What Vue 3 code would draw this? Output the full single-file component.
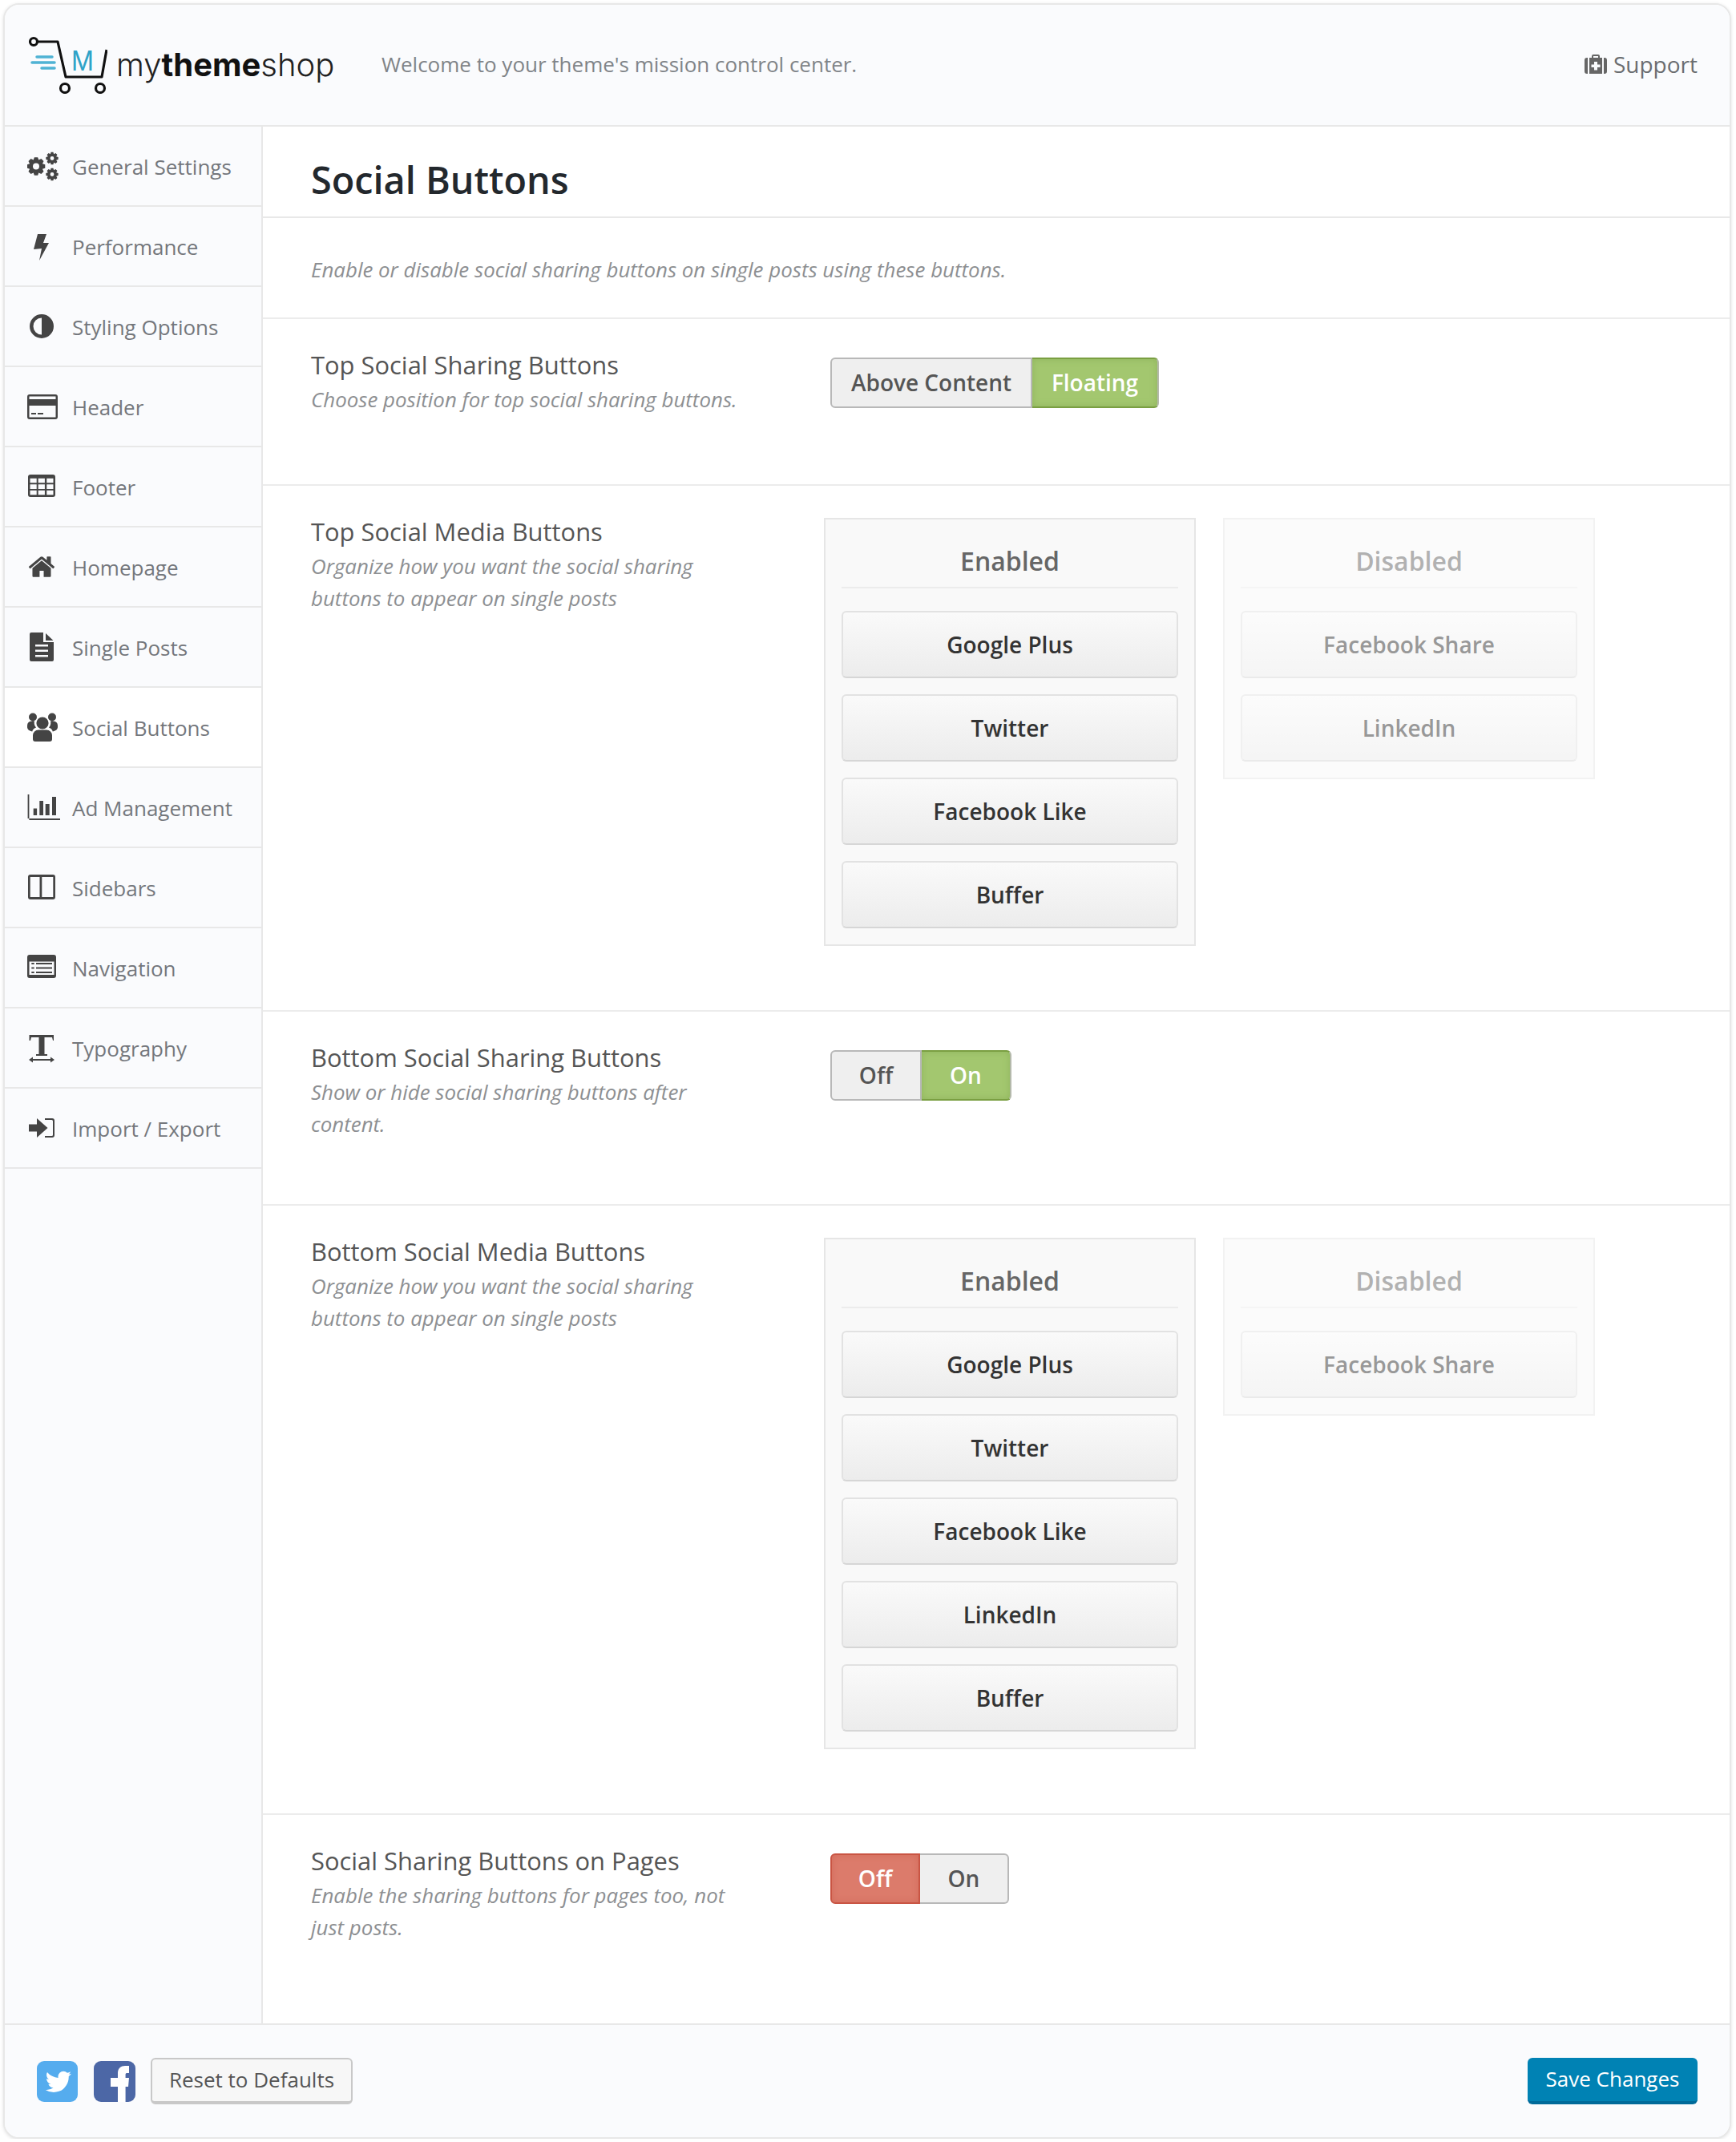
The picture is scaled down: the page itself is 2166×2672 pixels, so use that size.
<script setup>
function gear(cx, cy, ro, ri, hole, n) {
  let d = ''
  const step = (Math.PI * 2) / n
  for (let i = 0; i < n; i++) {
    const a = i * step - Math.PI / 2
    const pts = [
      [ri, a - step * 0.5],
      [ro, a - step * 0.24],
      [ro, a + step * 0.24],
      [ri, a + step * 0.5]
    ]
    pts.forEach(([r, t], j) => {
      const x = (cx + r * Math.cos(t)).toFixed(2)
      const y = (cy + r * Math.sin(t)).toFixed(2)
      d += (i === 0 && j === 0 ? 'M' : 'L') + x + ' ' + y
    })
  }
  d += `Z M${cx - hole} ${cy}a${hole} ${hole} 0 1 0 ${hole * 2} 0a${hole} ${hole} 0 1 0 ${-hole * 2} 0Z`
  return d
}
function rect(x, y, w, h) {
  return `M${x} ${y}h${w}v${h}h${-w}Z`
}
function round(x, y, w, h, r) {
  return `M${x + r} ${y}h${w - 2 * r}a${r} ${r} 0 0 1 ${r} ${r}v${h - 2 * r}a${r} ${r} 0 0 1 ${-r} ${r}h${-(w - 2 * r)}a${r} ${r} 0 0 1 ${-r} ${-r}v${-(h - 2 * r)}a${r} ${r} 0 0 1 ${r} ${-r}Z`
}
function circle(cx, cy, r) {
  return `M${cx - r} ${cy}a${r} ${r} 0 1 0 ${r * 2} 0a${r} ${r} 0 1 0 ${-r * 2} 0Z`
}
const table = [round(1, 5, 34, 28, 3)]
for (const y of [9.7, 17.3, 24.7]) for (const x of [3.5, 13.7, 24.3]) table.push(rect(x, y, 8.2, 5.6))

const navItems = [
  { label: 'General Settings', d: gear(11, 20.5, 11.5, 8.6, 4, 8) + gear(31, 10.5, 7.8, 5.6, 2.4, 8) + gear(31, 30.5, 7.8, 5.6, 2.4, 8) },
  { label: 'Performance', d: 'M13 5H24L20 16H27L15 38L18 23L8 24Z' },
  { label: 'Styling Options', d: circle(18, 20, 15) + 'M18 9.5a10.5 10.5 0 0 0 0 21Z' },
  { label: 'Header', d: round(0, 5, 38, 31, 3) + rect(2.5, 7.5, 33, 3.5) + rect(2.5, 19, 33, 14.5) + rect(5, 28, 6, 2) + rect(13, 28, 7, 2) },
  { label: 'Footer', d: table.join('') },
  { label: 'Homepage', vb: '-3 -104 2100 2000', d: 'M1472 992v480q0 26-19 45t-45 19h-384v-384h-256v384h-384q-26 0-45-19t-19-45v-480q0-1 .5-3t.5-3l575-474 575 474q1 2 1 6zm223-69l-62 74q-8 9-21 11h-3q-13 0-21-7l-692-577-692 577q-12 8-24 7-13-2-21-11l-62-74q-8-10-7-23.5t11-21.5l719-599q32-26 76-26t76 26l244 204v-195q0-14 9-23t23-9h192q14 0 23 9t9 23v408l219 182q10 8 11 21.5t-7 23.5z' },
  { label: 'Single Posts', d: 'M5 2H20V14H33V36a2 2 0 0 1-2 2H5a2 2 0 0 1-2-2V4a2 2 0 0 1 2-2Z' + rect(10, 17, 16, 2.6) + rect(10, 23.4, 16, 2.6) + rect(10, 30, 16, 2.6) + 'M23 3L32.5 12H23Z' },
  { label: 'Social Buttons', d: circle(19, 15, 7.6) + circle(7, 7.5, 5) + circle(31, 7.5, 5) + 'M0 18a5.5 5.5 0 0 1 5.5-5.5H9a9 9 0 0 0 2 8C8 21.5 6.6 23.5 6.3 25.5 3 25 0 23 0 20ZM38 18a5.5 5.5 0 0 0-5.5-5.5H29a9 9 0 0 1-2 8c3 1 4.400 3 4.700 5 3.300-.5 6.300-2.500 6.300-5.500ZM14 23.500H24a7 7 0 0 1 7 7V35a3 3 0 0 1-3 3H10a3 3 0 0 1-3-3V30.500a7 7 0 0 1 7-7Z' },
  { label: 'Ad Management', d: rect(0.6, 4, 1.8, 32) + rect(0.6, 34, 40.400, 2) + rect(7.700, 21.600, 4.400, 8.400) + rect(15.300, 12, 4.700, 18) + rect(22.700, 16, 5, 14) + rect(31, 7, 5, 23) },
  { label: 'Sidebars', d: round(1, 4, 34, 31, 3) + rect(3.700, 7, 11.800, 25) + rect(18.300, 7, 14, 25) },
  { label: 'Navigation', d: round(0, 4, 36, 29, 3) + rect(2.500, 12.600, 31, 16.500) + rect(5.300, 14, 3.400, 2) + rect(5.300, 19.500, 3.400, 2) + rect(5.300, 25, 3.400, 2) + rect(11, 14, 20, 2) + rect(11, 19.500, 20, 2) + rect(11, 25, 20, 2) },
  { label: 'Typography', d: 'M2.500 4H33V11H32L31 7H21.500V28H25V30H11V28H14.500V7H5L4 11H2.500ZM2 35L7 31.500V34H29V31.500L34 35L29 38.500V36H7V38.500Z' },
  { label: 'Import / Export', d: 'M2 15.500H12V8L25.500 20L12 32V24.500H2ZM22 8H31a3 3 0 0 1 3 3V29a3 3 0 0 1-3 3H22V30H30.500a1.500 1.500 0 0 0 1.500-1.500V11.500A1.500 1.500 0 0 0 30.500 10H22Z' }
]

const top = [
  { enabled: ['Google Plus', 'Twitter', 'Facebook Like', 'Buffer'], disabled: ['Facebook Share', 'LinkedIn'] },
  { enabled: ['Google Plus', 'Twitter', 'Facebook Like', 'LinkedIn', 'Buffer'], disabled: ['Facebook Share'] }
]
</script>

<template>
  <div class="card">
    <header class="header">
      <div class="logo">
        <svg class="mark" width="100" height="76" viewBox="0 0 100 76">
          <g fill="none" stroke="#111" stroke-width="3.200">
            <circle cx="8" cy="11" r="4.500" />
            <path d="M13 11H38L48 55H93L99 21" stroke-linejoin="round" />
            <circle cx="47" cy="69" r="5.500" />
            <circle cx="91" cy="69" r="5.500" />
          </g>
          <g stroke="#4fb3d4" stroke-width="3.500" stroke-linecap="round">
            <path d="M12 30H31M6 37H34M18 44H34" />
          </g>
          <text x="55" y="47" class="mark-m" textLength="28" lengthAdjust="spacingAndGlyphs">M</text>
        </svg>
        <span class="wordmark">my<b>theme</b>shop</span>
      </div>
      <span class="tagline">Welcome to your theme's mission control center.</span>
      <a class="support">
        <svg width="28" height="24" viewBox="0 0 28 24">
          <path fill="#666" fill-rule="evenodd" d="M9 4V2a2 2 0 0 1 2-2h6a2 2 0 0 1 2 2v2h3v20H6V4ZM11 4h6V2h-6ZM12 9v3.500H8.500v3.500H12v3.500h4V16h3.500v-3.500H16V9ZM0 7a3 3 0 0 1 3-3h1v20H3a3 3 0 0 1-3-3ZM24 4h1a3 3 0 0 1 3 3v14a3 3 0 0 1-3 3h-1Z" />
        </svg>
        Support
      </a>
    </header>

    <div class="body">
      <nav class="side">
        <a v-for="item in navItems" :key="item.label" class="nav-item" :class="{ active: item.label === 'Social Buttons' }">
          <svg class="nav-icon" width="42" height="40" :viewBox="item.vb || '0 0 42 40'">
            <path :d="item.d" fill="#444" fill-rule="evenodd" />
          </svg>
          <span class="nav-label">{{ item.label }}</span>
        </a>
      </nav>

      <main class="main">
        <h1 class="title">Social Buttons</h1>
        <p class="intro">Enable or disable social sharing buttons on single posts using these buttons.</p>

        <section class="row toggle-row short">
          <div class="info">
            <h3>Top Social Sharing Buttons</h3>
            <p>Choose position for top social sharing buttons.</p>
          </div>
          <div class="switch">
            <span class="seg seg-first wide-a">Above Content</span>
            <span class="seg seg-last green wide-b">Floating</span>
          </div>
        </section>

        <section class="row">
          <div class="info">
            <h3>Top Social Media Buttons</h3>
            <p>Organize how you want the social sharing buttons to appear on single posts</p>
          </div>
          <div class="lists">
            <div class="list">
              <h4>Enabled</h4>
              <div v-for="b in top[0].enabled" :key="b" class="drag">{{ b }}</div>
            </div>
            <div class="list off">
              <h4>Disabled</h4>
              <div v-for="b in top[0].disabled" :key="b" class="drag">{{ b }}</div>
            </div>
          </div>
        </section>

        <section class="row toggle-row tall">
          <div class="info">
            <h3>Bottom Social Sharing Buttons</h3>
            <p>Show or hide social sharing buttons after content.</p>
          </div>
          <div class="switch">
            <span class="seg seg-first w-off">Off</span>
            <span class="seg seg-last green w-on">On</span>
          </div>
        </section>

        <section class="row">
          <div class="info">
            <h3>Bottom Social Media Buttons</h3>
            <p>Organize how you want the social sharing buttons to appear on single posts</p>
          </div>
          <div class="lists">
            <div class="list">
              <h4>Enabled</h4>
              <div v-for="b in top[1].enabled" :key="b" class="drag">{{ b }}</div>
            </div>
            <div class="list off">
              <h4>Disabled</h4>
              <div v-for="b in top[1].disabled" :key="b" class="drag">{{ b }}</div>
            </div>
          </div>
        </section>

        <section class="row toggle-row last">
          <div class="info">
            <h3>Social Sharing Buttons on Pages</h3>
            <p>Enable the sharing buttons for pages too, not just posts.</p>
          </div>
          <div class="switch">
            <span class="seg seg-first red w-off2">Off</span>
            <span class="seg seg-last w-on2">On</span>
          </div>
        </section>
      </main>
    </div>

    <footer class="footer">
      <svg class="social" width="51" height="51" viewBox="0 0 51 51">
        <rect width="51" height="51" rx="9" fill="#55acee" />
        <g transform="translate(8.500 7.500) scale(0.0205)">
          <path fill="#fff" d="M1684 408q-67 98-162 167 1 14 1 42 0 130-38 259.500t-115.500 248.500-184.500 210.500-258 146-323 54.500q-271 0-496-145 35 4 78 4 225 0 401-138-105-2-188-64.500t-114-159.500q33 5 61 5 43 0 85-11-112-23-185.500-111.500t-73.500-205.500v-4q68 38 146 41-66-44-105-115t-39-154q0-88 44-163 121 149 294.500 238.500t371.500 99.500q-8-38-8-74 0-134 94.500-228.500t228.500-94.500q140 0 236 102 109-21 201-77-35 109-121 163.500 84-9 168-45z" />
        </g>
      </svg>
      <svg class="social" width="52" height="51" viewBox="0 0 52 51">
        <rect width="52" height="51" rx="9" fill="#4c67a6" />
        <path fill="#fff" d="M30 51V32H21V21H30V15C30 9 34 6 39 6H44V15H41C40 15 39.600 16 39.600 17V21H44L43 32H39.600V51Z" />
      </svg>
      <button class="reset">Reset to Defaults</button>
      <button class="save">Save Changes</button>
    </footer>
  </div>
</template>

<style scoped>
.card {
  box-sizing: border-box;
  width: 2156px;
  height: 2664px;
  margin: 4px 0 0 4px;
  border: 2px solid #e8e8e8;
  border-radius: 20px;
  overflow: hidden;
  display: flex;
  flex-direction: column;
  font-family: "Open Sans", "Liberation Sans", sans-serif;
  background: #fff;
  box-shadow: 0 1px 4px rgba(0, 0, 0, 0.12);
}
.header {
  box-sizing: border-box;
  height: 152px;
  flex: none;
  display: flex;
  align-items: center;
  padding: 0 40px 0 28px;
  background: #fafbfd;
  border-bottom: 2px solid #e8e8e8;
}
.logo {
  display: flex;
  align-items: center;
  width: 442px;
}
.mark {
  flex: none;
  margin-top: -4px;
}
.mark-m {
  font-family: Inter, "Open Sans", sans-serif;
  font-size: 34px;
  font-weight: 400;
  fill: #2fa3c8;
}
.wordmark {
  font-family: Inter, "Open Sans", sans-serif;
  font-size: 40px;
  font-weight: 300;
  color: #222;
  margin-left: 11px;
  margin-top: -2px;
}
.wordmark b {
  font-weight: 700;
  color: #111;
}
.tagline {
  font-size: 26px;
  color: #808488;
  margin-top: -2px;
}
.support {
  margin-left: auto;
  display: flex;
  align-items: center;
  gap: 8px;
  font-size: 28px;
  color: #6a6d70;
  margin-top: -2px;
}
.body {
  flex: 1;
  display: flex;
  min-height: 0;
}
.side {
  box-sizing: border-box;
  width: 322px;
  flex: none;
  background: #fafbfd;
  border-right: 2px solid #e8e8e8;
}
.nav-item {
  box-sizing: border-box;
  height: 100px;
  display: flex;
  align-items: center;
  padding-left: 28px;
  border-bottom: 2px solid #e8e8e8;
  font-size: 26px;
  color: #74777c;
}
.nav-item.active {
  background: #fff;
}
.nav-icon {
  flex: none;
  margin-right: 14px;
}
.nav-label {
  margin-top: 1px;
}
.main {
  flex: 1;
  min-width: 0;
  display: flex;
  flex-direction: column;
}
.title {
  box-sizing: border-box;
  margin: 0;
  height: 114px;
  line-height: 78px;
  padding: 27px 0 0 60px;
  font-size: 46.800px;
  font-weight: 600;
  color: #23282d;
  border-bottom: 2px solid #e8e8e8;
}
.intro {
  box-sizing: border-box;
  margin: 0;
  height: 126px;
  padding: 44px 0 0 60px;
  line-height: 40px;
  font-size: 25.900px;
  font-style: italic;
  color: #8d8f92;
  border-bottom: 2px solid #ececec;
}
.row {
  box-sizing: border-box;
  display: flex;
  padding: 40px 0 80px 60px;
  border-bottom: 2px solid #ececec;
  flex: none;
}
.toggle-row {
  padding-bottom: 0;
}
.short {
  height: 208px;
}
.tall {
  height: 242px;
}
.last {
  flex: 1;
  border-bottom: none;
}
.info {
  width: 640px;
  flex: none;
  margin-top: -3px;
}
.info h3 {
  margin: 0;
  font-size: 30.900px;
  line-height: 40px;
  font-weight: 400;
  color: #555;
}
.info p {
  margin: 3px 0 0;
  width: 540px;
  font-size: 25.900px;
  line-height: 40px;
  font-style: italic;
  color: #8d8f92;
}
.switch {
  margin: 8px 0 0 8px;
  height: 63px;
  display: flex;
}
.seg {
  box-sizing: border-box;
  height: 63px;
  padding-bottom: 2px;
  display: flex;
  align-items: center;
  justify-content: center;
  font-size: 28px;
  font-weight: 600;
  color: #555;
  background: #efefef;
  border: 2px solid #b8b8b8;
}
.seg-first {
  border-radius: 6px 0 0 6px;
}
.seg-last {
  border-radius: 0 6px 6px 0;
  border-left-width: 0;
}
.wide-a {
  width: 252px;
}
.wide-b {
  width: 158px;
}
.w-off {
  width: 114px;
}
.w-on {
  width: 112px;
}
.w-off2 {
  width: 112px;
}
.w-on2 {
  width: 111px;
}
.green {
  color: #fff;
  background: #a3c76f;
  border-top-color: #7a9f42;
  border-bottom-color: #7a9f42;
  border-right-color: #b4b9ab;
  box-shadow: inset 0 0 8px rgba(110, 150, 60, 0.35);
}
.red {
  color: #fff;
  background: #dc7b6b;
  border-color: #c95544;
  box-shadow: inset 0 0 8px rgba(190, 70, 50, 0.3);
}
.lists {
  display: flex;
  align-items: flex-start;
  gap: 34px;
}
.list {
  box-sizing: border-box;
  width: 464px;
  padding: 0 20px 20px;
  background: #f9f9f9;
  border: 2px solid #e6e6e6;
}
.list.off {
  opacity: 0.5;
}
.list h4 {
  box-sizing: border-box;
  margin: 0 0 28px;
  height: 86px;
  padding-top: 20px;
  line-height: 64px;
  text-align: center;
  font-size: 32px;
  font-weight: 600;
  color: #666;
  border-bottom: 2px solid #ececec;
}
.drag {
  box-sizing: border-box;
  height: 84px;
  padding-bottom: 1px;
  margin-bottom: 20px;
  display: flex;
  align-items: center;
  justify-content: center;
  font-size: 28px;
  font-weight: 600;
  color: #333;
  background: linear-gradient(#fafafa, #ececec);
  border: 2px solid #e2e2e2;
  border-bottom-color: #d6d6d6;
  border-radius: 6px;
}
.drag:last-child {
  margin-bottom: 0;
}
.footer {
  box-sizing: border-box;
  flex: none;
  height: 142px;
  display: flex;
  align-items: center;
  padding: 0 40px;
  background: #fafbfd;
  border-top: 2px solid #e8e8e8;
}
.social {
  flex: none;
  margin-right: 20px;
}
.social + .social {
  margin-right: 19px;
}
.reset,
.save {
  box-sizing: border-box;
  height: 58px;
  padding: 0 0 2px;
  font-family: inherit;
  font-size: 26px;
  border-radius: 6px;
}
.reset {
  width: 252px;
  color: #555;
  background: #f7f7f7;
  border: 2px solid #c8c8c8;
  border-bottom-width: 4px;
}
.save {
  width: 212px;
  margin-left: auto;
  color: #fff;
  background: #0082b4;
  border: none;
  border-bottom: 4px solid #006a99;
}
</style>

<style>
html, body {
  background: #fff;
}
</style>
